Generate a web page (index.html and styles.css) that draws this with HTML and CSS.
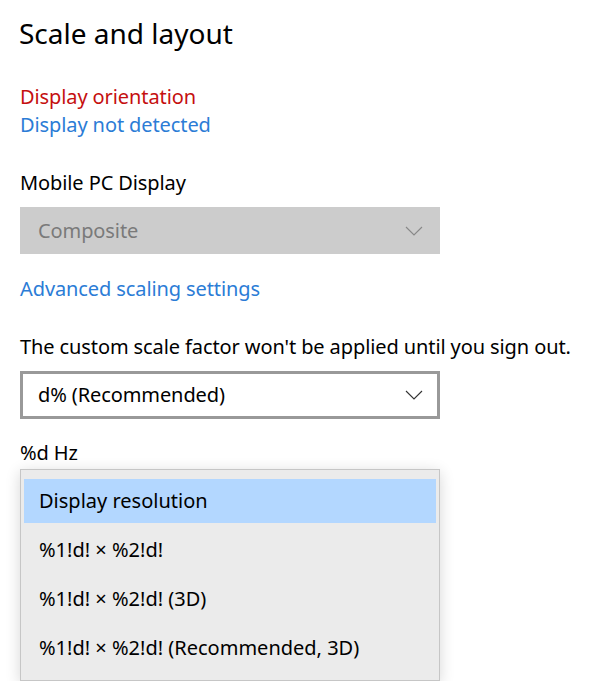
FILE: index.html
```html
<!DOCTYPE html>
<html lang="en">
<head>
    <meta charset="UTF-8">
    <link rel="stylesheet" href="styles.css">
</head>
<body>
    <div class="page">
        <h1 class="page-title">Scale and layout</h1>

        <!-- 状態表示 -->
        <div class="status">
            <div class="status-error">Display orientation</div>
            <a class="link" href="#">Display not detected</a>
        </div>

        <div class="field field-display">
            <div class="field-label">Mobile PC Display</div>
            <div class="combo combo-disabled">
                <span>Composite</span>
                <svg class="chevron" width="18" height="10" viewBox="0 0 18 10"><path d="M1 1 L9 9 L17 1" fill="none" stroke="currentColor" stroke-width="1.1"/></svg>
            </div>
        </div>

        <a class="link link-block" href="#">Advanced scaling settings</a>

        <div class="field field-scale">
            <div class="field-label">The custom scale factor won't be applied until you sign out.</div>
            <div class="combo">
                <span>d% (Recommended)</span>
                <svg class="chevron" width="18" height="10" viewBox="0 0 18 10"><path d="M1 1 L9 9 L17 1" fill="none" stroke="currentColor" stroke-width="1.1"/></svg>
            </div>
        </div>

        <div class="field field-rate">
            <div class="field-label">%d Hz</div>
            <!-- 開いたドロップダウン -->
            <div class="menu">
                <div class="menu-item selected">Display resolution</div>
                <div class="menu-item">%1!d! × %2!d!</div>
                <div class="menu-item">%1!d! × %2!d! (3D)</div>
                <div class="menu-item">%1!d! × %2!d! (Recommended, 3D)</div>
            </div>
        </div>
    </div>
</body>
</html>
```

FILE: styles.css
```css
* {
    box-sizing: border-box;
    margin: 0;
    padding: 0;
}

body {
    background: #fff;
    color: #000;
    font-family: "Noto Sans", "Open Sans", sans-serif;
    font-size: 20px;
    line-height: 28px;
    letter-spacing: -0.1px;
}

.page {
    padding: 13px 20px 0 20px;
    width: 592px;
}

.page-title {
    font-size: 28px;
    font-weight: normal;
    line-height: 40px;
    letter-spacing: 0;
    margin-left: -1px;
}

.status {
    margin-top: 30px;
}

.status-error {
    color: #c50f0f;
}

.link {
    display: block;
    color: #2b7cd6;
    text-decoration: none;
}

.field-display {
    margin-top: 30px;
}

.field-label {
    line-height: 28px;
    white-space: nowrap;
}

/* コンボボックス */
.combo {
    display: flex;
    justify-content: space-between;
    align-items: center;
    width: 420px;
    height: 48px;
    margin-top: 10px;
    padding: 0 14px 0 15px;
    border: 3px solid #999;
    background: #fff;
    color: #000;
}

.combo-disabled {
    height: 47px;
    border-color: #ccc;
    background: #ccc;
    color: #7a7a7a;
}

.combo .chevron {
    color: #333;
}

.combo-disabled .chevron {
    color: #888;
}

.link-block {
    margin-top: 21px;
}

.field-scale {
    margin-top: 30px;
}

.field-rate {
    margin-top: 20px;
}

/* ドロップダウンメニュー */
.menu {
    width: 420px;
    margin-top: 2px;
    padding: 9px 3px 10px 3px;
    background: #ebebeb;
    border: 1px solid #c6c6c6;
    box-shadow: 0 3px 14px rgba(0,0,0,0.16);
    display: flex;
    flex-direction: column;
    gap: 5px;
}

.menu-item {
    height: 44px;
    line-height: 44px;
    padding-left: 15px;
    letter-spacing: 0;
    color: #000;
}

.menu-item.selected {
    background: #b3d7ff;
}
```
